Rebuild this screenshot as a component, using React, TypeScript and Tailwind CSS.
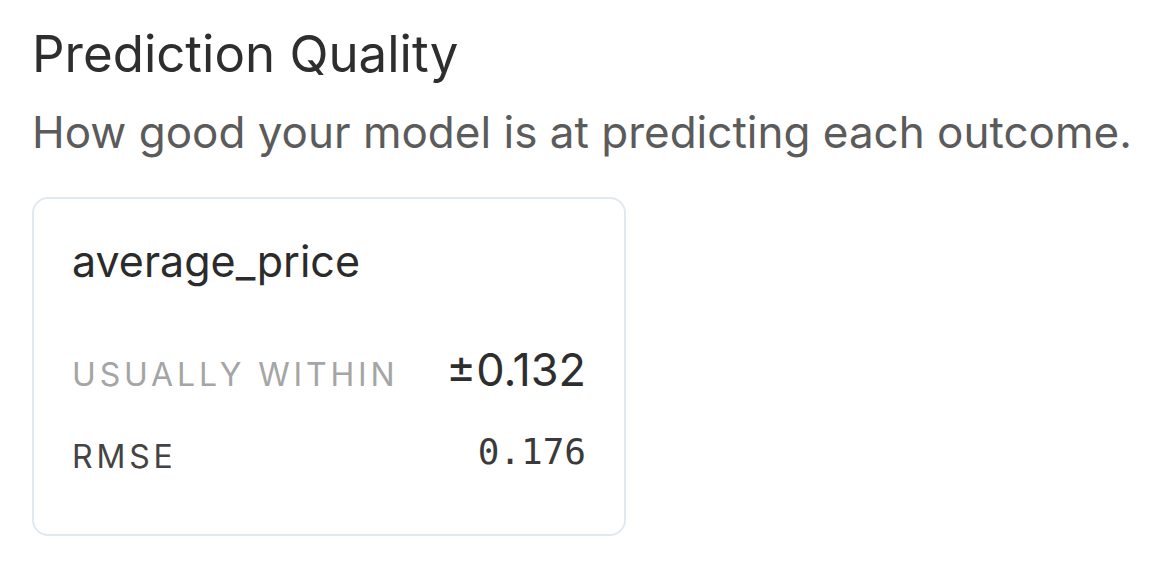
export default function App() {
  return (
    <div className="min-h-screen bg-white px-8 pt-[24px] font-['Inter',sans-serif]">
      <h2 className="text-[51px] leading-[60px] font-normal text-[#2e2e2e]">Prediction Quality</h2>
      <p className="mt-[20px] text-[44px] leading-[56px] text-[#5b5b5b]">
        How good your model is at predicting each outcome.
      </p>

      <div className="mt-[37px] w-[594px] rounded-[16px] border-2 border-[#e1e9f0] px-[38px] pt-[36px] pb-[48px]">
        <div className="text-[43px] leading-[52px] text-[#2b2b2b]">average_price</div>

        <div className="mt-[55px] flex items-baseline justify-between">
          <span className="text-[32px] leading-[56px] uppercase tracking-[0.12em] text-[#a5a5a5]">Usually within</span>
          <span className="text-[45px] leading-[56px] text-[#2e2e2e]">±0.132</span>
        </div>

        <div className="mt-[25px] flex items-center justify-between">
          <span className="text-[32px] leading-[48px] uppercase tracking-[0.12em] text-[#444444]">RMSE</span>
          <span className="mb-[10px] font-['DejaVu_Sans_Mono',monospace] text-[36px] leading-[48px] text-[#3a3a3a]">
            0.176
          </span>
        </div>
      </div>
    </div>
  )
}
